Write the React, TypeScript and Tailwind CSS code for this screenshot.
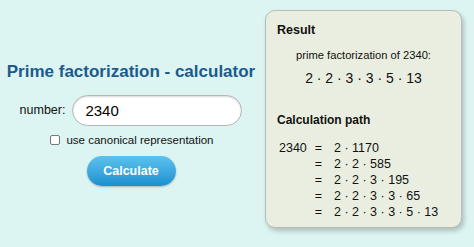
import React, { useState } from 'react';

const factors = '2 · 2 · 3 · 3 · 5 · 13';

const pathRows = [
  { left: '2340', right: '2 · 1170' },
  { left: '', right: '2 · 2 · 585' },
  { left: '', right: '2 · 2 · 3 · 195' },
  { left: '', right: '2 · 2 · 3 · 3 · 65' },
  { left: '', right: '2 · 2 · 3 · 3 · 5 · 13' },
];

export default function App() {
  const [num, setNum] = useState('2340');
  const [canonical, setCanonical] = useState(false);

  return (
    <div
      className="flex h-[247px] w-[474px] overflow-hidden bg-[#dcf4f2] text-[#111]"
      style={{ fontFamily: '"Liberation Sans", Arial, sans-serif' }}
    >
      <div className="flex w-[262px] flex-col items-center pt-[61px]">
        <h1 className="text-[17px] font-bold leading-[22px] text-[#1b5b8c]">
          Prime factorization - calculator
        </h1>

        <div className="mt-[12px] flex items-center">
          <label htmlFor="num" className="mr-[7px] text-[12.5px]">
            number:
          </label>
          <input
            id="num"
            value={num}
            onChange={(e) => setNum(e.target.value)}
            className="h-[31px] w-[170px] rounded-full border border-[#b5b5b5] bg-white px-[12px] text-[15px] text-black shadow-[inset_0_1px_2px_rgba(0,0,0,0.15)] outline-none"
          />
        </div>

        <label className="mt-[7px] flex items-center pl-[2px] text-[11.5px] leading-[14px]">
          <input
            type="checkbox"
            checked={canonical}
            onChange={(e) => setCanonical(e.target.checked)}
            className="mr-[6px] h-[10px] w-[10px] appearance-none rounded-[2px] border border-[#777] bg-white"
          />
          use canonical representation
        </label>

        <button className="mt-[9px] h-[30px] w-[89px] rounded-full bg-gradient-to-b from-[#5cc3ee] to-[#1990cf] text-[12.5px] font-bold text-white shadow-[0_1px_2px_rgba(0,0,0,0.25)]">
          Calculate
        </button>
      </div>

      <div className="mt-[10px] ml-[3px] h-[218px] w-[197px] rounded-[10px] border border-[#b9bdb4] bg-[#eaeee0] px-[11px] pt-[11px] shadow-[2px_3px_5px_rgba(0,0,0,0.22)]">
        <div className="text-[12.5px] font-bold leading-[16px]">Result</div>
        <div className="mt-[9px] text-center text-[11.2px] leading-[16px]">
          prime factorization of 2340:
        </div>
        <div className="mt-[5px] text-center text-[14px] leading-[20px]">{factors}</div>

        <div className="mt-[24px] text-[12px] font-bold leading-[16px]">Calculation path</div>
        <div className="mt-[12px] grid grid-cols-[30px_23px_auto] text-[12.5px] leading-[16px]">
          {pathRows.map((row, i) => (
            <React.Fragment key={i}>
              <span className="pl-[2px]">{row.left}</span>
              <span className="text-center">=</span>
              <span className="pl-[4px]">{row.right}</span>
            </React.Fragment>
          ))}
        </div>
      </div>
    </div>
  );
}
